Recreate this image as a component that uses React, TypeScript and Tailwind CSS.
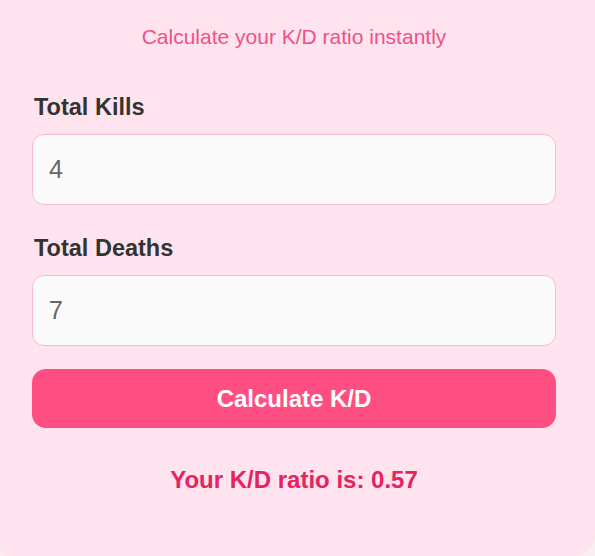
import { useState } from "react";

function Field({ label, value, onChange }: { label: string; value: string; onChange: (v: string) => void }) {
  return (
    <div className="flex flex-col">
      <label className="mb-[13px] ml-[2px] text-[23.5px] font-bold leading-[28px] text-[#333333]">{label}</label>
      <input
        type="number"
        value={value}
        onChange={(e) => onChange(e.target.value)}
        className="h-[71px] w-full rounded-[12px] border border-[#f5bcd0] bg-[#fafafa] px-4 text-[25px] text-[#666666] outline-none"
      />
    </div>
  );
}

export default function App() {
  const [kills, setKills] = useState("4");
  const [deaths, setDeaths] = useState("7");
  const [ratio, setRatio] = useState("0.57");

  const calculate = () => {
    const k = parseFloat(kills) || 0;
    const d = parseFloat(deaths) || 0;
    setRatio(d === 0 ? k.toFixed(2) : (k / d).toFixed(2));
  };

  return (
    <div className="h-[556px] w-[595px] overflow-hidden bg-[#fbeef3] font-['Liberation_Sans',Arial,sans-serif]">
      <div className="flex h-full flex-col rounded-bl-[8px] rounded-br-[20px] bg-[#ffe4ef] pl-8 pr-[39px] pt-[24px]">
        <p className="text-center text-[21px] leading-[25px] text-[#f05185]">Calculate your K/D ratio instantly</p>
        <div className="mt-[44px] flex flex-col gap-[29px]">
          <Field label="Total Kills" value={kills} onChange={setKills} />
          <Field label="Total Deaths" value={deaths} onChange={setDeaths} />
        </div>
        <button
          onClick={calculate}
          className="mt-[23px] h-[59px] w-full rounded-[14px] bg-[#ff4f82] text-[24px] font-bold text-white"
        >
          Calculate K/D
        </button>
        <p className="mt-[37px] text-center text-[24px] font-bold leading-[29px] text-[#e8215f]">
          Your K/D ratio is: {ratio}
        </p>
      </div>
    </div>
  );
}
